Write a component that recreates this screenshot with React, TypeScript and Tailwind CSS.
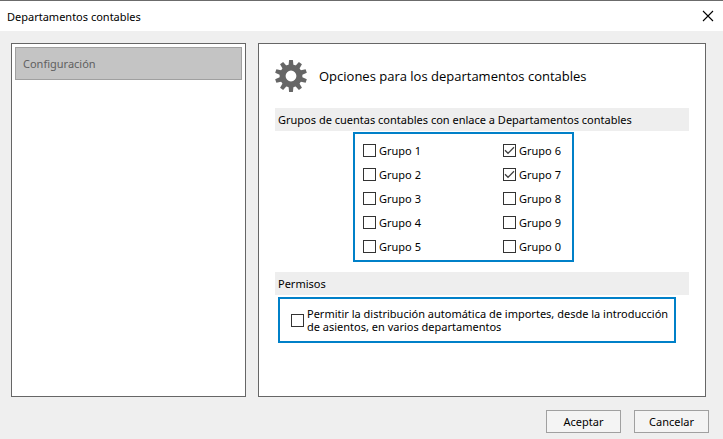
import { useState } from "react";
import type { ReactNode } from "react";

const TEETH = [0, 36, 72, 108, 144, 180, 216, 252, 288, 324];

const GROUPS = ["1", "6", "2", "7", "3", "8", "4", "9", "5", "0"];

function GearIcon() {
  return (
    <svg className="size-8 shrink-0" viewBox="-16 -16 32 32" fill="#666666" aria-hidden="true">
      {TEETH.map((angle) => (
        <path key={angle} d="M-2.5 -10 L-1.9 -16 L1.9 -16 L2.5 -10 Z" transform={`rotate(${angle})`} />
      ))}
      <circle r="8.4" fill="none" stroke="#666666" strokeWidth="6" />
    </svg>
  );
}

function CheckBox({ id, defaultChecked = false }: { id: string; defaultChecked?: boolean }) {
  const [checked, setChecked] = useState(defaultChecked);
  return (
    <span className="relative block size-[13px] shrink-0">
      <input
        id={id}
        type="checkbox"
        checked={checked}
        onChange={(event) => setChecked(event.target.checked)}
        className="block size-[13px] appearance-none border border-[#333333] bg-white"
      />
      {checked && (
        <svg
          className="pointer-events-none absolute inset-0 size-[13px]"
          viewBox="0 0 13 13"
          fill="none"
          stroke="#404040"
          strokeWidth="1.3"
          aria-hidden="true"
        >
          <path d="M2 6.3 L5 9.3 L11 3.3" />
        </svg>
      )}
    </span>
  );
}

function SectionTitle({ children }: { children: ReactNode }) {
  return <h2 className="h-[23px] bg-[#eeeeee] px-[3px] text-[11px] leading-[23px]">{children}</h2>;
}

function DialogButton({ children }: { children: ReactNode }) {
  return (
    <button type="button" className="h-[23px] w-[75px] border border-[#a0a0a0] bg-[#f4f4f4] text-[11px] leading-[21px]">
      {children}
    </button>
  );
}

export default function App() {
  return (
    <div className="flex min-h-screen flex-col bg-[#efefef] font-['Noto_Sans','Open_Sans',sans-serif] text-[11px] leading-[15px] text-black">
      <header className="flex h-[31px] items-center justify-between border-t border-[#6b6b6b] bg-white pr-[9px] pl-[7px]">
        <h1>Departamentos contables</h1>
        <button type="button" aria-label="Cerrar">
          <svg className="size-3" viewBox="0 0 12 12" stroke="#000000" strokeWidth="1.1" aria-hidden="true">
            <path d="M1 1 L11 11 M11 1 L1 11" />
          </svg>
        </button>
      </header>

      <div className="flex flex-1 gap-3 pt-3 pr-[17px] pl-[11px]">
        <nav className="w-[235px] shrink-0 border border-[#666666] bg-white p-[3px]">
          <button
            type="button"
            className="h-[33px] w-full border border-[#a0a0a0] bg-[#c4c4c4] px-[7px] text-left text-[#606060]"
          >
            Configuración
          </button>
        </nav>

        <main className="min-w-0 flex-1 border border-[#666666] bg-white p-4">
          <div className="mb-4 flex items-center gap-3">
            <GearIcon />
            <p className="font-['Open_Sans','Noto_Sans',sans-serif] text-[13px] leading-5">
              Opciones para los departamentos contables
            </p>
          </div>

          <SectionTitle>Grupos de cuentas contables con enlace a Departamentos contables</SectionTitle>
          <div className="mt-px ml-[78px] grid w-[221px] grid-cols-[140px_1fr] gap-y-[11px] border-2 border-[#0080c8] pt-[10px] pb-[7px] pl-2">
            {GROUPS.map((group) => (
              <div key={group} className="flex h-[13px] items-center gap-[3px]">
                <CheckBox id={`grupo-${group}`} defaultChecked={group === "6" || group === "7"} />
                <label htmlFor={`grupo-${group}`}>Grupo {group}</label>
              </div>
            ))}
          </div>

          <div className="mt-[10px]">
            <SectionTitle>Permisos</SectionTitle>
            <div className="mt-[2px] mr-[13px] ml-[3px] flex h-[46px] items-center gap-[3px] border-2 border-[#0080c8] pl-[11px]">
              <CheckBox id="permitir" />
              <label htmlFor="permitir" className="leading-[13px]">
                Permitir la distribución automática de importes, desde la introducción
                <br />
                de asientos, en varios departamentos
              </label>
            </div>
          </div>
        </main>
      </div>

      <footer className="flex justify-end gap-[13px] pt-[13px] pr-[14px] pb-[6px]">
        <DialogButton>Aceptar</DialogButton>
        <DialogButton>Cancelar</DialogButton>
      </footer>
    </div>
  );
}
